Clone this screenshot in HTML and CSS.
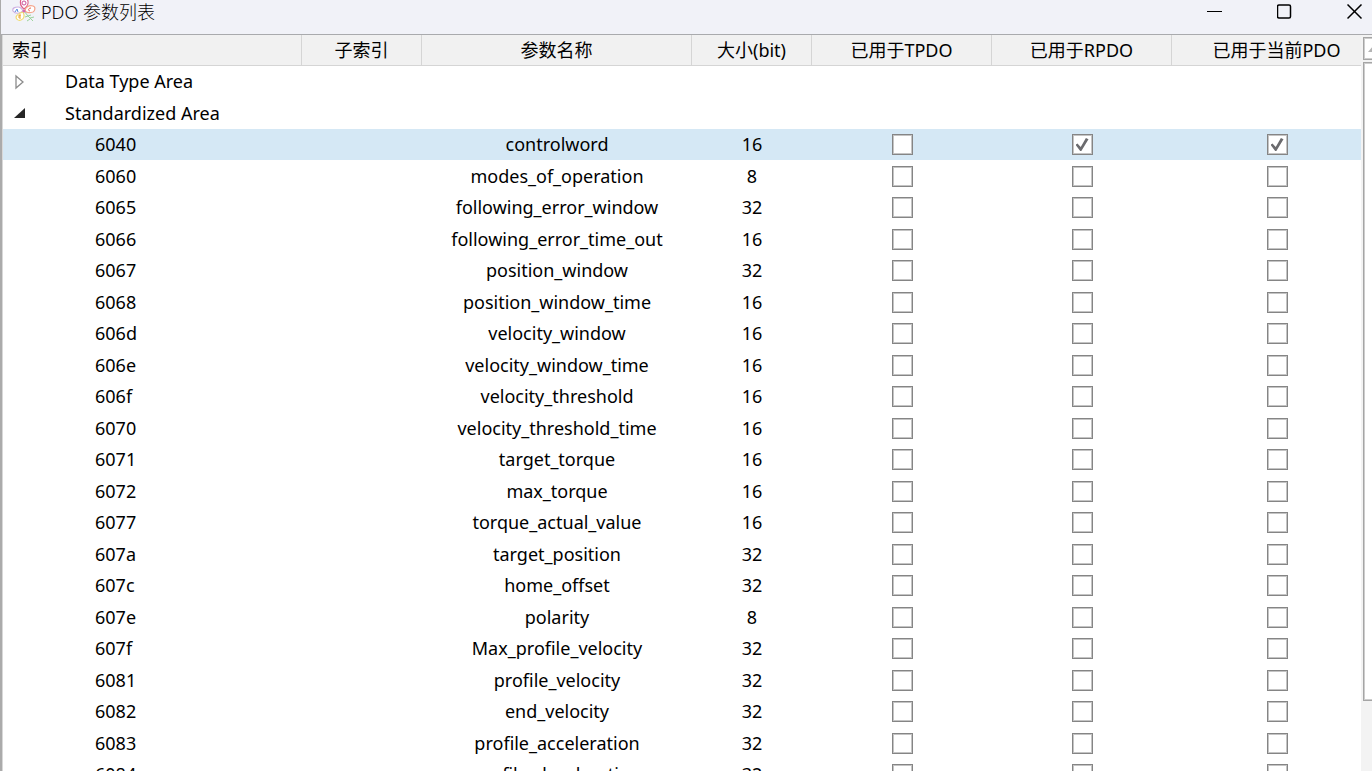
FILE: index.html
```html
<!DOCTYPE html>
<html lang="zh-CN">
<head>
<meta charset="utf-8">
<meta name="viewport" content="width=device-width, initial-scale=1">
<title>PDO 参数列表</title>
<link rel="stylesheet" href="styles.css">
</head>
<body>
<div class="window">
  <header class="titlebar">
    <svg class="app-icon" viewBox="0 0 24 24" aria-hidden="true">
      <g fill="#fff" stroke-width="1.2">
        <path d="M12 9C8 6 8 2 9-1h6c2 3 1 7-3 10z" stroke="#e0608a"/>
        <path d="M11 11C8 14 3 14 1 11c-1-3 2-4 5-4 3 0 4 2 5 4z" stroke="#cdb0e2"/>
        <path d="M13 11c0-4 4-6 8-5 3 1 2 5 0 6-3 1-6 1-8-1z" stroke="#f5a58c"/>
        <path d="M11 12c2 4 1 7-2 8-3 1-5-1-5-3 1-3 4-4 7-5z" stroke="#f0dc70"/>
      </g>
      <circle cx="12" cy="3" r="2" fill="none" stroke="#c94f9a"/>
      <path d="M5 9l-2 3M5 9l1 3" stroke="#5b8de0" fill="none"/>
      <path d="M19 8c-3 0-3 3-1 3" stroke="#e8604c" fill="none"/>
      <path d="M9 15H7v3h2M7 16h2" stroke="#eda52c" fill="none"/>
      <path d="M12 11l4 5 5 5M16 16l-3 1M16 16l3-1M18 19l-3 2M18 18l4-1" stroke="#9cd49c" fill="none"/>
      <circle cx="12" cy="11" r="1.5" fill="#d56ab0"/>
    </svg>
    <h1 class="title">PDO 参数列表</h1>
    <div class="window-buttons">
      <button class="window-button" type="button" aria-label="最小化"><svg viewBox="0 0 16 16"><path d="M0 7.500h15"/></svg></button>
      <button class="window-button" type="button" aria-label="最大化"><svg viewBox="0 0 16 16"><rect class="thick" x="0.500" y="1" width="13" height="13" rx="1.500"/></svg></button>
      <button class="window-button" type="button" aria-label="关闭"><svg viewBox="0 0 16 16"><path class="thick" d="M.5.500l14 14M14.500.500l-14 14"/></svg></button>
    </div>
  </header>
  <main class="content">
    <div class="frame-edge"></div>
    <div class="list">
      <table class="grid">
        <colgroup><col class="c-index"><col class="c-small"><col class="c-name"><col class="c-small"><col class="c-flag"><col class="c-flag"><col class="c-current"></colgroup>
        <thead>
          <tr><th scope="col" class="first">索引</th><th scope="col">子索引</th><th scope="col">参数名称</th><th scope="col">大小(bit)</th><th scope="col">已用于TPDO</th><th scope="col">已用于RPDO</th><th scope="col">已用于当前PDO</th></tr>
        </thead>
        <tbody>
          <tr><td class="group" colspan="7"><div class="group-cell"><button class="toggle" type="button" aria-expanded="false" aria-label="展开"><svg viewBox="0 0 12 16"><path d="M1 2l7 6-7 6z" fill="#fff" stroke="#8c8c8c" stroke-width="1.300"/></svg></button><span>Data Type Area</span></div></td></tr>
          <tr><td class="group" colspan="7"><div class="group-cell"><button class="toggle" type="button" aria-expanded="true" aria-label="折叠"><svg viewBox="0 0 12 16"><path d="M10 3v10H-1z" fill="#262626"/></svg></button><span>Standardized Area</span></div></td></tr>
          <tr class="selected"><td class="index">6040</td><td></td><td>controlword</td><td>16</td><td><input type="checkbox" aria-label="6040 TPDO"></td><td><input type="checkbox" aria-label="6040 RPDO" checked></td><td><input type="checkbox" aria-label="6040 当前PDO" checked></td></tr>
          <tr><td class="index">6060</td><td></td><td>modes_of_operation</td><td>8</td><td><input type="checkbox" aria-label="6060 TPDO"></td><td><input type="checkbox" aria-label="6060 RPDO"></td><td><input type="checkbox" aria-label="6060 当前PDO"></td></tr>
          <tr><td class="index">6065</td><td></td><td>following_error_window</td><td>32</td><td><input type="checkbox" aria-label="6065 TPDO"></td><td><input type="checkbox" aria-label="6065 RPDO"></td><td><input type="checkbox" aria-label="6065 当前PDO"></td></tr>
          <tr><td class="index">6066</td><td></td><td>following_error_time_out</td><td>16</td><td><input type="checkbox" aria-label="6066 TPDO"></td><td><input type="checkbox" aria-label="6066 RPDO"></td><td><input type="checkbox" aria-label="6066 当前PDO"></td></tr>
          <tr><td class="index">6067</td><td></td><td>position_window</td><td>32</td><td><input type="checkbox" aria-label="6067 TPDO"></td><td><input type="checkbox" aria-label="6067 RPDO"></td><td><input type="checkbox" aria-label="6067 当前PDO"></td></tr>
          <tr><td class="index">6068</td><td></td><td>position_window_time</td><td>16</td><td><input type="checkbox" aria-label="6068 TPDO"></td><td><input type="checkbox" aria-label="6068 RPDO"></td><td><input type="checkbox" aria-label="6068 当前PDO"></td></tr>
          <tr><td class="index">606d</td><td></td><td>velocity_window</td><td>16</td><td><input type="checkbox" aria-label="606d TPDO"></td><td><input type="checkbox" aria-label="606d RPDO"></td><td><input type="checkbox" aria-label="606d 当前PDO"></td></tr>
          <tr><td class="index">606e</td><td></td><td>velocity_window_time</td><td>16</td><td><input type="checkbox" aria-label="606e TPDO"></td><td><input type="checkbox" aria-label="606e RPDO"></td><td><input type="checkbox" aria-label="606e 当前PDO"></td></tr>
          <tr><td class="index">606f</td><td></td><td>velocity_threshold</td><td>16</td><td><input type="checkbox" aria-label="606f TPDO"></td><td><input type="checkbox" aria-label="606f RPDO"></td><td><input type="checkbox" aria-label="606f 当前PDO"></td></tr>
          <tr><td class="index">6070</td><td></td><td>velocity_threshold_time</td><td>16</td><td><input type="checkbox" aria-label="6070 TPDO"></td><td><input type="checkbox" aria-label="6070 RPDO"></td><td><input type="checkbox" aria-label="6070 当前PDO"></td></tr>
          <tr><td class="index">6071</td><td></td><td>target_torque</td><td>16</td><td><input type="checkbox" aria-label="6071 TPDO"></td><td><input type="checkbox" aria-label="6071 RPDO"></td><td><input type="checkbox" aria-label="6071 当前PDO"></td></tr>
          <tr><td class="index">6072</td><td></td><td>max_torque</td><td>16</td><td><input type="checkbox" aria-label="6072 TPDO"></td><td><input type="checkbox" aria-label="6072 RPDO"></td><td><input type="checkbox" aria-label="6072 当前PDO"></td></tr>
          <tr><td class="index">6077</td><td></td><td>torque_actual_value</td><td>16</td><td><input type="checkbox" aria-label="6077 TPDO"></td><td><input type="checkbox" aria-label="6077 RPDO"></td><td><input type="checkbox" aria-label="6077 当前PDO"></td></tr>
          <tr><td class="index">607a</td><td></td><td>target_position</td><td>32</td><td><input type="checkbox" aria-label="607a TPDO"></td><td><input type="checkbox" aria-label="607a RPDO"></td><td><input type="checkbox" aria-label="607a 当前PDO"></td></tr>
          <tr><td class="index">607c</td><td></td><td>home_offset</td><td>32</td><td><input type="checkbox" aria-label="607c TPDO"></td><td><input type="checkbox" aria-label="607c RPDO"></td><td><input type="checkbox" aria-label="607c 当前PDO"></td></tr>
          <tr><td class="index">607e</td><td></td><td>polarity</td><td>8</td><td><input type="checkbox" aria-label="607e TPDO"></td><td><input type="checkbox" aria-label="607e RPDO"></td><td><input type="checkbox" aria-label="607e 当前PDO"></td></tr>
          <tr><td class="index">607f</td><td></td><td>Max_profile_velocity</td><td>32</td><td><input type="checkbox" aria-label="607f TPDO"></td><td><input type="checkbox" aria-label="607f RPDO"></td><td><input type="checkbox" aria-label="607f 当前PDO"></td></tr>
          <tr><td class="index">6081</td><td></td><td>profile_velocity</td><td>32</td><td><input type="checkbox" aria-label="6081 TPDO"></td><td><input type="checkbox" aria-label="6081 RPDO"></td><td><input type="checkbox" aria-label="6081 当前PDO"></td></tr>
          <tr><td class="index">6082</td><td></td><td>end_velocity</td><td>32</td><td><input type="checkbox" aria-label="6082 TPDO"></td><td><input type="checkbox" aria-label="6082 RPDO"></td><td><input type="checkbox" aria-label="6082 当前PDO"></td></tr>
          <tr><td class="index">6083</td><td></td><td>profile_acceleration</td><td>32</td><td><input type="checkbox" aria-label="6083 TPDO"></td><td><input type="checkbox" aria-label="6083 RPDO"></td><td><input type="checkbox" aria-label="6083 当前PDO"></td></tr>
          <tr><td class="index">6084</td><td></td><td>profile_deceleration</td><td>32</td><td><input type="checkbox" aria-label="6084 TPDO"></td><td><input type="checkbox" aria-label="6084 RPDO"></td><td><input type="checkbox" aria-label="6084 当前PDO"></td></tr>
        </tbody>
      </table>
    </div>
    <div class="scrollbar">
      <button class="scroll-up" type="button" aria-label="向上滚动"><svg viewBox="0 0 12 8"><path d="M0 7l6-7 6 7z" fill="#b4b4b4"/></svg></button>
      <div class="scroll-thumb"></div>
    </div>
  </main>
</div>
</body>
</html>
```
FILE: styles.css
```css
* { box-sizing: border-box; }

body {
  margin: 0;
  background: #fff;
  color: #000;
  font: 18px/25px "Noto Sans", "Noto Sans CJK SC", sans-serif;
}

button {
  padding: 0;
  border: 0;
  background: none;
  font: inherit;
}

.window {
  display: flex;
  flex-direction: column;
  height: 100vh;
  border-left: 1px solid #ababab;
  overflow: hidden;
}

.titlebar {
  flex: none;
  display: flex;
  align-items: flex-start;
  height: 35px;
  padding: 0 9px 0 11px;
  border-bottom: 1px solid #a9aaad;
  background: #f1f2f8;
}

.app-icon { width: 24px; height: 24px; }

.title {
  flex: 1;
  margin: 0;
  padding-left: 5px;
  font-size: 18px;
  font-weight: 300;
  line-height: 24px;
}

.window-buttons { display: flex; gap: 54px; padding-top: 4px; }
.window-button { width: 16px; height: 16px; }
.window-button svg { display: block; width: 16px; height: 16px; fill: none; stroke: #000; }
.window-button .thick { stroke-width: 1.5; }

.content { flex: 1; min-height: 0; display: flex; }

.frame-edge {
  flex: none;
  width: 2px;
  border-right: 1px solid #d8d8d8;
  background: #ababab;
}

.list { flex: 1; min-width: 0; overflow: hidden; }

.grid {
  width: 1379px;
  table-layout: fixed;
  border-collapse: separate;
  border-spacing: 0;
}
.c-index { width: 299px; }
.c-small { width: 120px; }
.c-name { width: 270px; }
.c-flag { width: 180px; }
.c-current { width: 210px; }

th, td { padding: 0; text-align: center; white-space: nowrap; vertical-align: middle; }

th {
  height: 31px;
  border-right: 1px solid #d5d5d5;
  border-bottom: 1px solid #d5d5d5;
  background: #f1f1f1;
  font-weight: 400;
}
th.first { padding-left: 9px; text-align: left; }

/* Rows alternate so that two of them take 63px. */
tbody tr:nth-child(odd) td { height: 31px; }
tbody tr:nth-child(even) td { height: 32px; }

.selected { background: #d5e8f5; }
td.index { padding-left: 92px; text-align: left; }
td.group { text-align: left; }

.group-cell { display: flex; align-items: center; padding-left: 12px; }
.toggle { width: 50px; height: 16px; text-align: left; }
.toggle svg { display: block; width: 12px; height: 16px; overflow: visible; }

input[type="checkbox"] {
  appearance: none;
  display: block;
  width: 21px;
  height: 21px;
  margin: 0 auto;
  border: 1px solid #858585;
  background: #fff;
  box-shadow: inset 0 0 0 1px #c4c4c4;
}
input[type="checkbox"]:checked::after {
  content: "";
  display: block;
  width: 13px;
  height: 13px;
  margin: 3px;
  background: #6b6b6e;
  clip-path: polygon(0 52%, 15% 42%, 40% 70%, 80% 0, 100% 10%, 45% 100%, 36% 100%);
}

.scrollbar {
  flex: none;
  display: flex;
  flex-direction: column;
  gap: 2px;
  width: 11px;
  padding: 2px 0 70px 2px;
  overflow: hidden;
  background: #f3f3f3;
}
.scroll-up,
.scroll-thumb {
  width: 20px;
  border: 1px solid #a5a5a5;
  background: #fff;
  box-shadow: inset 0 0 0 1px #cdcdcd;
}
.scroll-up { flex: none; height: 23px; padding-left: 4px; }
.scroll-up svg { display: block; width: 12px; height: 8px; }
.scroll-thumb { flex: 1; }
```
